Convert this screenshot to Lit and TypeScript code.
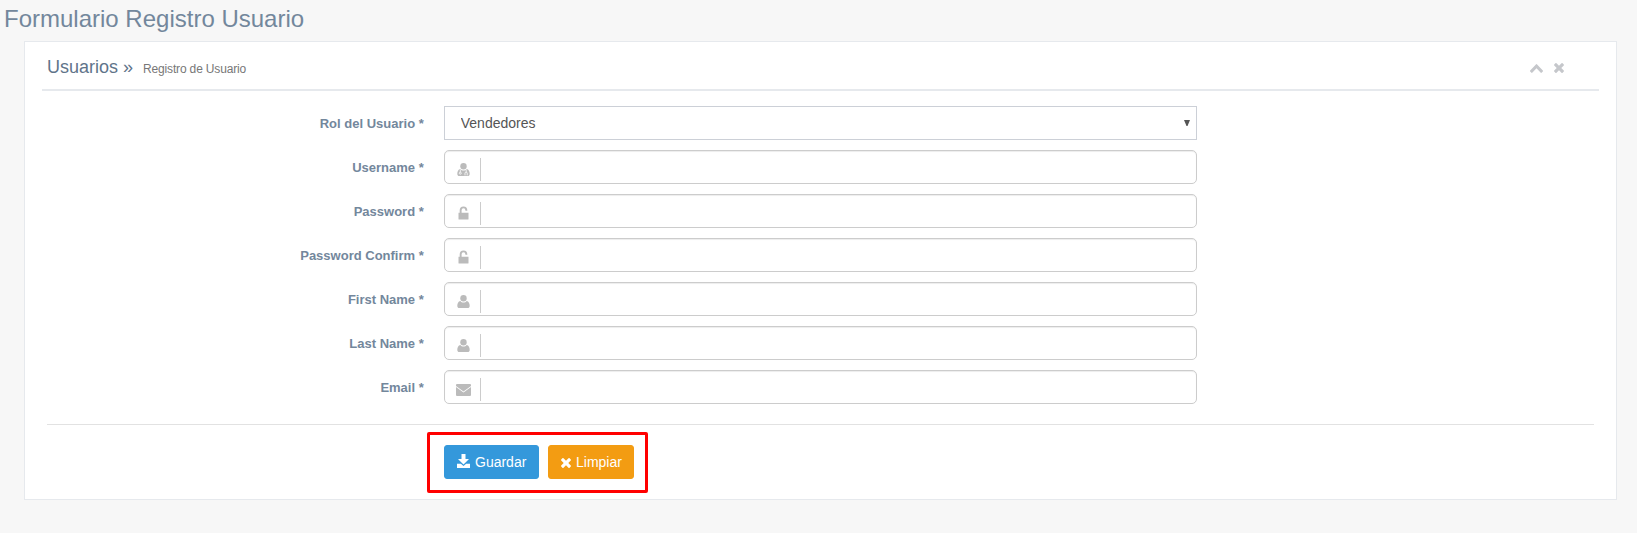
import { LitElement, html, css, svg } from "lit";
import { customElement } from "lit/decorators.js";

const TIMES = svg`<path d="M1490 1322q0 40-28 68l-136 136q-28 28-68 28t-68-28l-294-294-294 294q-28 28-68 28t-68-28l-136-136q-28-28-28-68t28-68l294-294-294-294q-28-28-28-68t28-68l136-136q28-28 68-28t68 28l294 294 294-294q28-28 68-28t68 28l136 136q28 28 28 68t-28 68l-294 294 294 294q28 28 28 68z"/>`;
const USER = svg`<circle cx="6.500" cy="3.300" r="3.200"/><path d="M3.400 5.900C4.200 6.900 5.200 7.400 6.500 7.400s2.300-.5 3.100-1.500c2.200.2 3.100 2.500 3.100 5 0 1.200-.8 2.100-2 2.100H2.300c-1.200 0-2-.9-2-2.100 0-2.500.9-4.800 3.100-5z"/>`;

const icons: Record<string, unknown> = {
  user: html`<svg class="user" viewBox="0 0 13 13">${USER}</svg>`,
  doctor: html`<svg class="user" viewBox="0 0 13 13">${USER}
    <g fill="none" stroke="#fff" stroke-width=".8">
      <path d="M3.300 6.500v2.700M8 12.400v-2.200q0-1 1.100-1t1.100 1v2.200M9.200 6.500v2.700"/>
      <circle cx="3.300" cy="10.200" r="1"/>
    </g></svg>`,
  lock: html`<svg class="lock" viewBox="0 0 11 14"><path d="M.5 6.800h1.200V4.200a3.800 3.800 0 0 1 7.600 0v.6H7.400v-.6a1.900 1.900 0 0 0-3.800 0v2.600h6.900V13q0 .6-.6.600H1.100Q.5 13.600.5 13z"/></svg>`,
  mail: html`<svg class="mail" viewBox="0 0 15 12"><path d="M1 0h13q1 0 1 1v.9L7.500 7.500 0 1.900V1q0-1 1-1zM0 3l7.500 5.600L15 3v8q0 1-1 1H1q-1 0-1-1z"/></svg>`,
};

const fields = [
  { label: "Username", icon: "doctor" },
  { label: "Password", icon: "lock" },
  { label: "Password Confirm", icon: "lock" },
  { label: "First Name", icon: "user" },
  { label: "Last Name", icon: "user" },
  { label: "Email", icon: "mail" },
];

@customElement("app-root")
export class AppRoot extends LitElement {
  static styles = css`
    * { box-sizing: border-box; }
    :host {
      display: block;
      height: 533px;
      overflow: hidden;
      background: #f7f7f7;
      color: #73879c;
      font: 13px/20px "Liberation Sans", Arial, sans-serif;
    }
    svg { display: block; fill: currentColor; }
    h3 { margin: 0; padding: 6px 0 0 4px; height: 41px; font-size: 24px; line-height: 26px; font-weight: 400; }
    .panel {
      margin: 0 20px 0 24px;
      width: 1593px;
      height: 459px;
      padding: 0 17px;
      background: #fff;
      border: 1px solid #e6e9ed;
    }
    .title {
      display: flex;
      align-items: baseline;
      height: 49px;
      padding: 14px 35px 0 5px;
      border-bottom: 2px solid #e6e9ed;
    }
    h2 { margin: 0; font-size: 18px; line-height: 22px; font-weight: 400; color: #5f748a; white-space: nowrap; }
    small { margin-left: 10px; font-size: 12px; letter-spacing: -0.16px; color: #777; }
    .tools { display: flex; gap: 11px; align-items: center; align-self: flex-start; margin: 7px 0 0 auto; color: #c5c7cb; }
    .chevron { width: 13px; height: 9px; margin-top: 1px; }
    .close { width: 10px; height: 10px; }
    form { padding: 15px 5px 0; }
    .row { display: grid; grid-template-columns: 25% 50%; margin-bottom: 10px; }
    label { padding: 9px 10px 0 0; text-align: right; font-weight: 700; line-height: 18px; white-space: nowrap; }
    .field { display: grid; padding: 0 10px; }
    .field > * { grid-area: 1 / 1; }
    input, select {
      width: 100%;
      height: 34px;
      margin: 0;
      border: 1px solid #ccc;
      background: #fff;
      color: #555;
      font: 14px/20px "Liberation Sans", Arial, sans-serif;
      outline: 0;
    }
    input { padding: 6px 12px 6px 48px; border-radius: 5px; box-shadow: inset 0 1px 1px rgba(0, 0, 0, 0.075); }
    select { appearance: none; padding: 0 16px; border-color: #ccd0d7; border-radius: 0; }
    .arrow { justify-self: end; align-self: start; margin: 14px 7px 0 0; width: 6px; height: 6px; color: #555; pointer-events: none; }
    .adorn {
      z-index: 1;
      display: flex;
      justify-content: center;
      width: 37px;
      height: 23px;
      margin-top: 8px;
      border-right: 1px solid #ccc;
      color: #bbb;
      pointer-events: none;
    }
    .user { width: 13px; height: 13px; margin-top: 5px; margin-left: 3px; }
    .lock { width: 11px; height: 14px; margin-top: 4px; margin-left: 3px; }
    .mail { width: 15px; height: 12px; margin-top: 6px; margin-left: 3px; }
    hr { height: 1px; margin: 20px 0 7px; border: 0; background: #e2e2e2; }
    .mark { display: flex; gap: 9px; width: 221px; height: 61px; margin-left: 380px; padding: 10px 0 0 14px; border: 3px solid #f00; border-radius: 2px; }
    button {
      display: flex;
      align-items: center;
      height: 34px;
      padding: 0 12px;
      border: 1px solid #3498db;
      border-radius: 3px;
      background: #3498db;
      color: #fff;
      font: 14px/20px "Liberation Sans", Arial, sans-serif;
    }
    .save { width: 95px; gap: 5px; }
    .clear { width: 86px; gap: 5px; background: #f39c12; border-color: #f39c12; }
    .save svg { width: 13px; height: 14px; flex: none; margin-top: -2px; }
    .clear svg { width: 10px; height: 10px; flex: none; margin-top: 1px; }
  `;

  render() {
    return html`
      <h3>Formulario Registro Usuario</h3>
      <section class="panel">
        <div class="title">
          <h2>Usuarios »</h2>
          <small>Registro de Usuario</small>
          <div class="tools">
            <svg class="chevron" viewBox="90 480 1612 1036" preserveAspectRatio="none"><path d="M1683 1331l-166 165q-19 19-45 19t-45-19l-531-531-531 531q-19 19-45 19t-45-19l-166-165q-19-19-19-45.500t19-45.500l742-741q19-19 45-19t45 19l742 741q19 19 19 45.500t-19 45.500z"/></svg>
            <svg class="close" viewBox="302 366 1188 1188">${TIMES}</svg>
          </div>
        </div>
        <form>
          <div class="row">
            <label>Rol del Usuario *</label>
            <div class="field">
              <select><option>Vendedores</option></select>
              <svg class="arrow" viewBox="0 0 6 6"><path d="M0 0h6L3.500 6h-1z"/></svg>
            </div>
          </div>
          ${fields.map(
            (f) => html`<div class="row">
              <label>${f.label} *</label>
              <div class="field">
                <input />
                <div class="adorn">${icons[f.icon]}</div>
              </div>
            </div>`
          )}
          <hr />
          <div class="mark">
            <button type="button" class="save">
              <svg viewBox="0 0 13 14"><path d="M4.500 0h4v5H12L6.500 10.500 1 5H4.500zM0 9.800h3.900l2.600 2.200 2.600-2.200H13V14H0z"/></svg>Guardar
            </button>
            <button type="button" class="clear">
              <svg viewBox="302 366 1188 1188">${TIMES}</svg>Limpiar
            </button>
          </div>
        </form>
      </section>
    `;
  }
}
